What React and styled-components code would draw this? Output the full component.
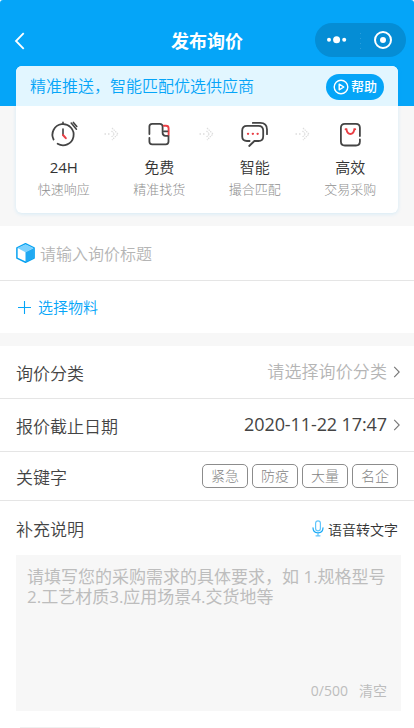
import React from 'react'
import styled, { createGlobalStyle } from 'styled-components'

const GlobalStyle = createGlobalStyle`
* {
    box-sizing: border-box;
}
body {
    margin: 0;
    background: #ffffff;
    color: #444444;
    font-family: 'Open Sans', 'Noto Sans CJK SC', sans-serif;
}
`

const Page = styled.div`
width: 414px;
height: 728px;
overflow: hidden;
`
const Hero = styled.div`
height: 226px;
border-radius: 3px 3px 0 0;
background: linear-gradient(#05a5f8 106px, #f7f7f7 106px);
`
const NavBar = styled.header`
display: grid;
grid-template-columns: 1fr auto 1fr;
align-items: center;
height: 66px;
padding: 14px 8px 0 14px;
`
const BackIcon = styled.svg`
margin-top: 2px;
`
const Title = styled.h1`
margin: 0;
padding: 1px 6px 0 0;
color: #ffffff;
font-size: 18px;
font-weight: 700;
line-height: 26px;
`
const Capsule = styled.div`
display: flex;
align-items: center;
justify-self: end;
width: 91px;
height: 34px;
border-radius: 17px;
background: #058dd5;
`
const Card = styled.section`
width: 382px;
height: 147px;
margin: 0 16px;
overflow: hidden;
border-radius: 6px;
background: #ffffff;
box-shadow: 0 1px 4px rgba(5, 165, 248, 0.14);
`
const Banner = styled.div`
display: flex;
align-items: center;
justify-content: space-between;
height: 40px;
padding: 0 14px;
background: #e2f6ff;
color: #05a5f8;
font-size: 16px;
font-weight: 350;
line-height: 22px;
`
const HelpButton = styled.button`
display: flex;
align-items: center;
justify-content: center;
gap: 2px;
width: 58px;
height: 26px;
margin-top: 2px;
padding: 0;
border: 0;
border-radius: 13px;
background: #05a5f8;
color: #ffffff;
font-family: inherit;
font-size: 13px;
font-weight: 500;
line-height: 18px;
`
const HelpText = styled.span`
padding-bottom: 2px;
`
const Steps = styled.div`
display: flex;
justify-content: center;
padding-top: 15px;
`
const Step = styled.div`
display: flex;
flex-direction: column;
align-items: center;
width: 80px;
`
const StepName = styled.div`
margin-top: 7px;
color: #333333;
font-size: 15px;
font-weight: ${props => props.$latin ? 400 : 350};
line-height: 22px;
`
const StepNote = styled.div`
color: #8f8f8f;
font-size: 13px;
font-weight: 300;
line-height: 22px;
`
const StepArrow = styled.svg`
flex: none;
width: 15.5px;
height: 14px;
margin-top: 6px;
`
const Separator = styled.div`
height: 13px;
background: #f7f7f7;
`
const Row = styled.div`
display: flex;
align-items: center;
justify-content: space-between;
height: ${props => props.$height}px;
padding: 0 ${props => props.$right || 16}px 0 16px;
border-bottom: ${props => props.$last ? '0' : '1px solid #e5e5e5'};
`
const Label = styled.div`
padding-top: 1px;
color: #444444;
font-size: 17px;
font-weight: 350;
`
const TitleField = styled.div`
display: flex;
align-items: center;
gap: 4px;
color: #b5b5b5;
font-size: 16px;
font-weight: 350;
`
const AddButton = styled.div`
display: flex;
align-items: center;
gap: 6px;
padding-bottom: 1px;
color: #05a5f8;
font-size: 15px;
font-weight: 350;
`
const Value = styled.div`
display: flex;
align-items: center;
gap: 6px;
padding-bottom: 3px;
color: ${props => props.$placeholder ? '#b5b5b5' : '#444444'};
font-size: ${props => props.$placeholder ? 17 : 18}px;
font-weight: ${props => props.$placeholder ? 350 : 400};
letter-spacing: ${props => props.$placeholder ? '0.1px' : '-0.1px'};
`
const Chevron = styled.svg`
margin-top: 2px;
`
const Tags = styled.div`
display: flex;
gap: 4px;
`
const Tag = styled.div`
width: 46px;
height: 24px;
border: 1px solid #8c8c8c;
border-radius: 5px;
color: #858585;
font-size: 14px;
font-weight: 300;
line-height: 22px;
text-align: center;
`
const Voice = styled.div`
display: flex;
align-items: center;
gap: 4px;
padding-top: 1px;
color: #333333;
font-size: 14px;
font-weight: 350;
`
const NoteBox = styled.div`
display: flex;
flex-direction: column;
justify-content: space-between;
width: 385px;
height: 156px;
margin-left: 16px;
padding: 12px 14px 10px 11px;
background: #f7f7f7;
color: #bdbdbd;
`
const NoteText = styled.div`
font-size: 17px;
line-height: 20px;
white-space: nowrap;
`
const NoteFooter = styled.div`
display: flex;
justify-content: flex-end;
gap: 11px;
font-size: 14px;
line-height: 20px;
`
const NextBlock = styled.div`
width: 80px;
height: 1px;
margin: 16px 0 0 20px;
background: #f0f0f0;
`

const ClockIcon = () => (
    <svg width='28' height='28' viewBox='0 0 28 28' fill='none' strokeLinecap='round'>
        <path d='M3.6 18.5A10.6 10.6 0 1 1 7.6 22.8' stroke='#444' strokeWidth='1.8' />
        <path d='M13 1.2v2M21.2 2l5.2 6.2M23.4 1.4l3.4 4' stroke='#444' strokeWidth='1.6' />
        <path d='M13 8v6' stroke='#444' strokeWidth='1.6' />
        <path d='M13 14l2.8 3.2' stroke='#e93f45' strokeWidth='2' />
    </svg>
)

const BookIcon = () => (
    <svg width='28' height='28' viewBox='0 0 28 28' fill='none' strokeLinecap='round'>
        <path d='M4.4 13V5.5Q4.4 2.8 7.2 2.8h7.6q2.8 0 2.8 2.8v6.2q0 2.9 2.9 3.1h3v5.6q0 2.8-2.8 2.8H7.2q-2.8 0-2.8-2.8V17' stroke='#444' strokeWidth='1.8' />
        <path d='M18.8 4.8h2.2q2.6 0 2.6 2.5v6.2' stroke='#e93f45' strokeWidth='1.9' />
        <path d='M18.8 10.4h3.6' stroke='#444' strokeWidth='1.6' />
    </svg>
)

const ChatIcon = () => (
    <svg width='28' height='28' viewBox='0 0 28 28' fill='none' strokeLinecap='round'>
        <path d='M8.6 20H6Q1.2 20 1.2 15.5V9.6Q1.2 4.8 6 4.8h11.4q4.8 0 4.8 4.8v5.6q0 4.8-4.8 4.8h-4L8.2 25' stroke='#444' strokeWidth='1.8' />
        <path d='M11.8 1.9h7.4q6.8 0 6.8 6.6v4.7' stroke='#444' strokeWidth='1.8' />
        <path d='M7 12.8h.1M11.8 12.8h.1M16.6 12.8h.1' stroke='#e93f45' strokeWidth='2.3' />
    </svg>
)

const BagIcon = () => (
    <svg width='28' height='28' viewBox='0 0 28 28' fill='none' strokeLinecap='round'>
        <path d='M23.9 18.5v2q0 4-4 4H8.9q-4 0-4-4V6.8q0-4 4-4h11q4 0 4 4V15' stroke='#444' strokeWidth='1.8' />
        <path d='M9.6 8.2h.8q.8 4.8 4 4.8t4-4.8h.8' stroke='#e93f45' strokeWidth='1.9' />
    </svg>
)

const CubeIcon = () => (
    <svg width='20' height='20' viewBox='0 0 20 20'>
        <path d='M9.5 .8l8.6 4.1v10.2L9.5 19.2.9 15.1V4.9z' fill='#fff' stroke='#08a2f1' strokeWidth='1.5' strokeLinejoin='round' />
        <path d='M9.5 1.3l8 3.8-8 4.1-8-4.1z' fill='#7cd2ff' />
        <path d='M9.5 9.2l8.4-4.1v9.8L9.5 19z' fill='#20a9f2' />
    </svg>
)

const RightArrow = () => (
    <Chevron width='8' height='12' viewBox='0 0 8 12' fill='none'>
        <path d='M1.2 .8L6.2 6l-5 5.2' stroke='#777' strokeWidth='1.1' />
    </Chevron>
)

const steps = [
    { name: '24H', note: '快速响应', Icon: ClockIcon, latin: true },
    { name: '免费', note: '精准找货', Icon: BookIcon },
    { name: '智能', note: '撮合匹配', Icon: ChatIcon },
    { name: '高效', note: '交易采购', Icon: BagIcon },
]

const keywords = ['紧急', '防疫', '大量', '名企']

const App = () => {
    return (
        <Page>
            <GlobalStyle />
            <Hero>
                <NavBar>
                    <BackIcon width='12' height='18' viewBox='0 0 12 18' fill='none'>
                        <path d='M9.7 1.2L2 9l7.7 7.8' stroke='#fff' strokeWidth='1.8' />
                    </BackIcon>
                    <Title>发布询价</Title>
                    <Capsule>
                        <svg width='91' height='34' viewBox='0 0 91 34'>
                            <circle cx='14' cy='16.7' r='2' fill='#fff' />
                            <circle cx='21.6' cy='16.7' r='3.5' fill='#fff' />
                            <circle cx='29.2' cy='16.7' r='2' fill='#fff' />
                            <path d='M45.5 10v17' stroke='#2b9edc' strokeDasharray='1 4' />
                            <circle cx='68' cy='17' r='8' fill='none' stroke='#fff' strokeWidth='2' />
                            <circle cx='68' cy='17' r='3' fill='#fff' />
                        </svg>
                    </Capsule>
                </NavBar>
                <Card>
                    <Banner>
                        精准推送，智能匹配优选供应商
                        <HelpButton>
                            <svg width='16' height='16' viewBox='0 0 16 16' fill='none' stroke='#fff' strokeWidth='1.4'>
                                <circle cx='8' cy='8' r='6.8' />
                                <path d='M6.2 5.2v5.6L10.8 8z' strokeLinejoin='round' />
                            </svg>
                            <HelpText>帮助</HelpText>
                        </HelpButton>
                    </Banner>
                    <Steps>
                        {steps.map(({ name, note, Icon, latin }, i) => (
                            <React.Fragment key={name}>
                                {i > 0 && (
                                    <StepArrow viewBox='0 0 15.5 14' fill='none' stroke='#dddddd'>
                                        <path d='M.5 7h1.5M4 7h1.5' strokeWidth='1.5' />
                                        <path d='M8 1l6 6-6 6M7.5 4l3 3-3 3' strokeWidth='1.2' strokeDasharray='1.5 .8' />
                                    </StepArrow>
                                )}
                                <Step>
                                    <Icon />
                                    <StepName $latin={latin}>{name}</StepName>
                                    <StepNote>{note}</StepNote>
                                </Step>
                            </React.Fragment>
                        ))}
                    </Steps>
                </Card>
            </Hero>
            <Row $height={55}>
                <TitleField>
                    <CubeIcon />
                    请输入询价标题
                </TitleField>
            </Row>
            <Row $height={52} $last>
                <AddButton>
                    <svg width='16' height='14' viewBox='0 0 16 14'>
                        <path d='M2 7.5h13M8.5 1v13' stroke='#05a5f8' strokeWidth='1.1' />
                    </svg>
                    选择物料
                </AddButton>
            </Row>
            <Separator />
            <Row $height={53} $right={13}>
                <Label>询价分类</Label>
                <Value $placeholder>
                    请选择询价分类
                    <RightArrow />
                </Value>
            </Row>
            <Row $height={53} $right={13}>
                <Label>报价截止日期</Label>
                <Value>
                    2020-11-22 17:47
                    <RightArrow />
                </Value>
            </Row>
            <Row $height={49}>
                <Label>关键字</Label>
                <Tags>
                    {keywords.map(word => <Tag key={word}>{word}</Tag>)}
                </Tags>
            </Row>
            <Row $height={54} $last>
                <Label>补充说明</Label>
                <Voice>
                    <svg width='12' height='17' viewBox='0 0 12 17' fill='none' strokeLinecap='round'>
                        <rect x='3.6' y='.8' width='4.8' height='10' rx='2.4' stroke='#62c5fb' strokeWidth='1.2' />
                        <path d='M1 7.8q0 5 5 5t5-5' stroke='#12a8f6' strokeWidth='1.2' />
                        <path d='M6 13v2.5M4 15.8h4' stroke='#62c5fb' strokeWidth='1.2' />
                    </svg>
                    语音转文字
                </Voice>
            </Row>
            <NoteBox>
                <NoteText>
                    请填写您的采购需求的具体要求，如 1.规格型号<br />
                    2.工艺材质3.应用场景4.交货地等
                </NoteText>
                <NoteFooter>
                    <span>0/500</span>
                    <span>清空</span>
                </NoteFooter>
            </NoteBox>
            <NextBlock />
        </Page>
    )
}

export default App
